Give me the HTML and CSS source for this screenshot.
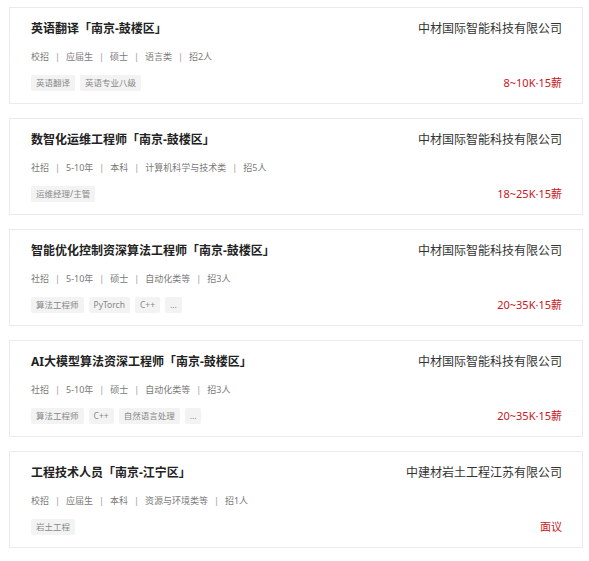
FILE: index.html
```html
<!DOCTYPE html>
<html lang="zh-CN">
<head>
<meta charset="utf-8">
<title>职位列表</title>
<link rel="stylesheet" href="styles.css">
</head>
<body>
<div class="list">
  <div class="card">
    <div class="row">
      <div class="title">英语翻译「南京-鼓楼区」</div>
      <div class="company">中材国际智能科技有限公司</div>
    </div>
    <div class="meta"><span>校招</span><i>|</i><span>应届生</span><i>|</i><span>硕士</span><i>|</i><span>语言类</span><i>|</i><span>招2人</span></div>
    <div class="row bottom">
      <div class="tags"><span class="tag">英语翻译</span><span class="tag">英语专业八级</span></div>
      <div class="salary">8~10K·15薪</div>
    </div>
  </div>
  <div class="card">
    <div class="row">
      <div class="title">数智化运维工程师「南京-鼓楼区」</div>
      <div class="company">中材国际智能科技有限公司</div>
    </div>
    <div class="meta"><span>社招</span><i>|</i><span>5-10年</span><i>|</i><span>本科</span><i>|</i><span>计算机科学与技术类</span><i>|</i><span>招5人</span></div>
    <div class="row bottom">
      <div class="tags"><span class="tag">运维经理/主管</span></div>
      <div class="salary">18~25K·15薪</div>
    </div>
  </div>
  <div class="card">
    <div class="row">
      <div class="title">智能优化控制资深算法工程师「南京-鼓楼区」</div>
      <div class="company">中材国际智能科技有限公司</div>
    </div>
    <div class="meta"><span>社招</span><i>|</i><span>5-10年</span><i>|</i><span>硕士</span><i>|</i><span>自动化类等</span><i>|</i><span>招3人</span></div>
    <div class="row bottom">
      <div class="tags"><span class="tag">算法工程师</span><span class="tag">PyTorch</span><span class="tag">C++</span><span class="tag">...</span></div>
      <div class="salary">20~35K·15薪</div>
    </div>
  </div>
  <div class="card">
    <div class="row">
      <div class="title">AI大模型算法资深工程师「南京-鼓楼区」</div>
      <div class="company">中材国际智能科技有限公司</div>
    </div>
    <div class="meta"><span>社招</span><i>|</i><span>5-10年</span><i>|</i><span>硕士</span><i>|</i><span>自动化类等</span><i>|</i><span>招3人</span></div>
    <div class="row bottom">
      <div class="tags"><span class="tag">算法工程师</span><span class="tag">C++</span><span class="tag">自然语言处理</span><span class="tag">...</span></div>
      <div class="salary">20~35K·15薪</div>
    </div>
  </div>
  <div class="card">
    <div class="row">
      <div class="title">工程技术人员「南京-江宁区」</div>
      <div class="company">中建材岩土工程江苏有限公司</div>
    </div>
    <div class="meta"><span>校招</span><i>|</i><span>应届生</span><i>|</i><span>本科</span><i>|</i><span>资源与环境类等</span><i>|</i><span>招1人</span></div>
    <div class="row bottom">
      <div class="tags"><span class="tag">岩土工程</span></div>
      <div class="salary">面议</div>
    </div>
  </div>
</div>
</body>
</html>
```

FILE: styles.css
```css
* { box-sizing: border-box; }
html, body { background: #fff; }
body {
  margin: 0;
  padding: 7px 6px 0 9px;
  font-family: "Noto Sans", "Noto Sans CJK SC", sans-serif;
  color: #333;
}
.list {
  display: flex;
  flex-direction: column;
  gap: 14px;
  width: 574px;
}
.card {
  border: 1px solid #ebebeb;
  background: #fff;
  height: 97px;
  padding: 12px 20px 0 21px;
}
.row {
  display: flex;
  justify-content: space-between;
  align-items: center;
}
.title {
  font-size: 12px;
  line-height: 18px;
  font-weight: 700;
  color: #222;
}
.company {
  font-size: 12px;
  line-height: 18px;
  color: #333;
}
.meta {
  margin-top: 12px;
  font-size: 9px;
  line-height: 14px;
  color: #7a7a7a;
}
.meta i {
  font-style: normal;
  color: #999;
  margin: 0 6px;
}
.bottom { margin-top: 11px; }
.tags {
  display: flex;
  gap: 5px;
}
.tag {
  background: #f3f3f3;
  color: #888;
  font-size: 8.5px;
  line-height: 16px;
  height: 16px;
  padding: 0 5px;
  border-radius: 2px;
}
.salary {
  font-size: 11px;
  line-height: 16px;
  color: #c8161d;
}
```
